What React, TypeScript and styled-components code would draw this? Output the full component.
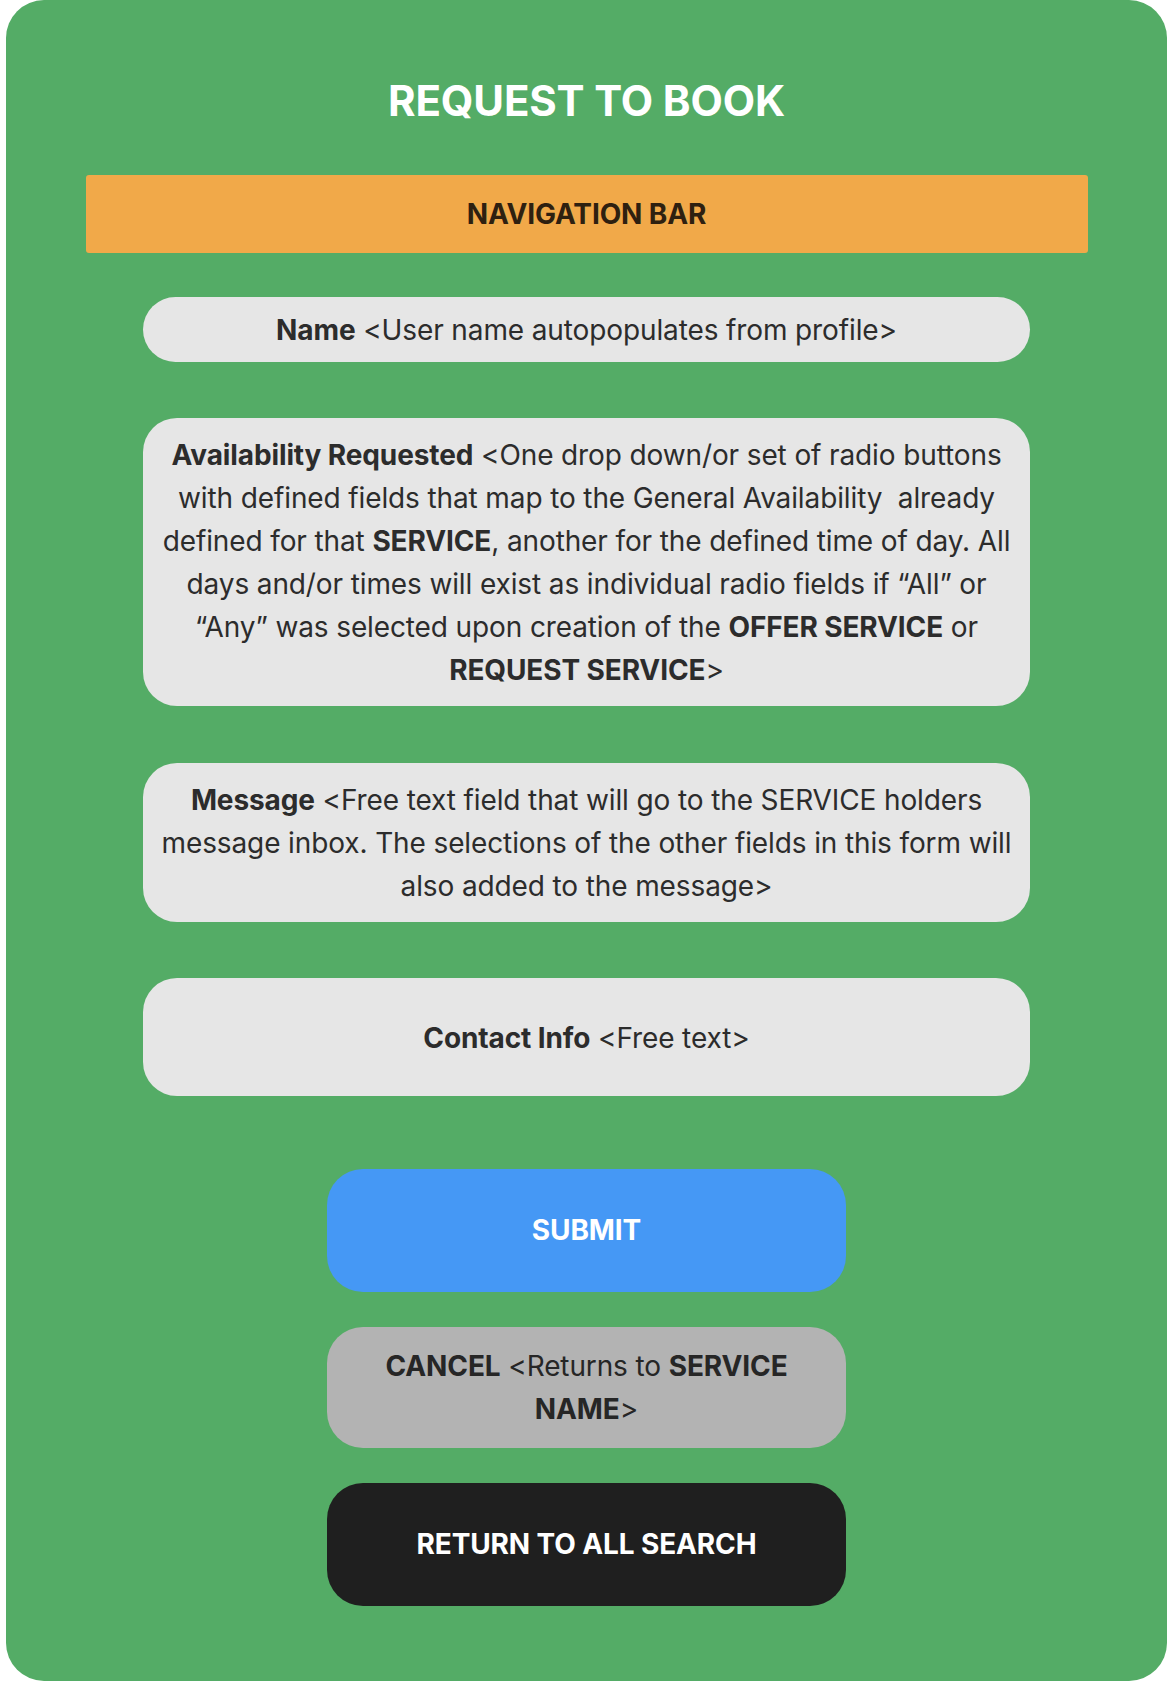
import React from 'react';
import styled, { createGlobalStyle } from 'styled-components';

const GlobalStyle = createGlobalStyle`
  html, body {
    margin: 0;
    padding: 0;
    background: #ffffff;
  }
  body {
    font-family: Inter, 'Noto Sans', 'Liberation Sans', sans-serif;
  }
`;

const Panel = styled.div`
  margin-left: 6px;
  width: 1161px;
  height: 1681px;
  box-sizing: border-box;
  background: #54ac66;
  border-radius: 38px;
  display: flex;
  flex-direction: column;
  align-items: center;
`;

const Title = styled.h1`
  margin: 76px 0 0;
  height: 50px;
  line-height: 50px;
  font-size: 42px;
  font-weight: 700;
  letter-spacing: -0.15px;
  color: #ffffff;
  text-align: center;
`;

const NavBar = styled.div`
  margin-top: 49px;
  width: 1002px;
  height: 78px;
  border-radius: 3px;
  background: #f1a949;
  display: flex;
  align-items: center;
  justify-content: center;
  font-size: 28px;
  font-weight: 700;
  letter-spacing: -0.12px;
  color: #2e2010;
`;

const Field = styled.div<{ $height: number; $gap: number }>`
  margin-top: ${(p) => p.$gap}px;
  width: 887px;
  height: ${(p) => p.$height}px;
  box-sizing: border-box;
  padding: 2px 10px 0;
  border-radius: 34px;
  background: #e6e6e6;
  display: flex;
  align-items: center;
  justify-content: center;
  text-align: center;
  font-size: 28px;
  line-height: 43px;
  letter-spacing: -0.12px;
  color: #2c2c2c;
  white-space: nowrap;

  b {
    font-weight: 700;
  }
`;

type Variant = 'primary' | 'secondary' | 'dark';

const colors: Record<Variant, { bg: string; fg: string }> = {
  primary: { bg: '#4598f5', fg: '#ffffff' },
  secondary: { bg: '#b3b3b3', fg: '#262626' },
  dark: { bg: '#1f1f1f', fg: '#ffffff' },
};

const ActionButton = styled.div<{ $variant: Variant; $gap: number; $height: number }>`
  margin-top: ${(p) => p.$gap}px;
  width: 519px;
  height: ${(p) => p.$height}px;
  border-radius: 36px;
  background: ${(p) => colors[p.$variant].bg};
  color: ${(p) => colors[p.$variant].fg};
  display: flex;
  align-items: center;
  justify-content: center;
  text-align: center;
  font-size: 28px;
  line-height: 43px;
  letter-spacing: -0.12px;
  font-weight: ${(p) => (p.$variant === 'secondary' ? 400 : 700)};
  white-space: nowrap;

  b {
    font-weight: 700;
  }
`;

export default function App() {
  return (
    <>
      <GlobalStyle />
      <Panel>
        <Title>REQUEST TO BOOK</Title>
        <NavBar>NAVIGATION BAR</NavBar>

        <Field $gap={44} $height={65}>
          <span>
            <b>Name</b> &lt;User name autopopulates from profile&gt;
          </span>
        </Field>

        <Field $gap={56} $height={288}>
          <span>
            <b>Availability Requested</b> &lt;One drop down/or set of radio buttons
            <br />
            with defined fields that map to the General Availability&nbsp; already
            <br />
            defined for that <b>SERVICE</b>, another for the defined time of day. All
            <br />
            days and/or times will exist as individual radio fields if “All” or
            <br />
            “Any” was selected upon creation of the <b>OFFER SERVICE</b> or
            <br />
            <b>REQUEST SERVICE</b>&gt;
          </span>
        </Field>

        <Field $gap={57} $height={159}>
          <span>
            <b>Message</b> &lt;Free text field that will go to the SERVICE holders
            <br />
            message inbox. The selections of the other fields in this form will
            <br />
            also added to the message&gt;
          </span>
        </Field>

        <Field $gap={56} $height={118}>
          <span>
            <b>Contact Info</b> &lt;Free text&gt;
          </span>
        </Field>

        <ActionButton $variant="primary" $gap={73} $height={123}>
          SUBMIT
        </ActionButton>

        <ActionButton $variant="secondary" $gap={35} $height={121}>
          <span>
            <b>CANCEL</b> &lt;Returns to <b>SERVICE</b>
            <br />
            <b>NAME</b>&gt;
          </span>
        </ActionButton>

        <ActionButton $variant="dark" $gap={35} $height={123}>
          RETURN TO ALL SEARCH
        </ActionButton>
      </Panel>
    </>
  );
}
